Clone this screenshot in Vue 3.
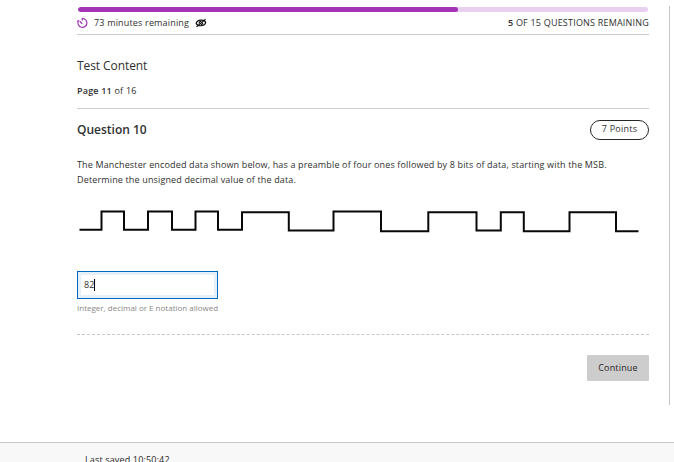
<script setup>
import { ref } from 'vue'

const answered = 379.5
const total = 570
const answer = ref('82')
</script>

<template>
  <div class="page">
    <main class="panel">
      <div class="progress">
        <div class="bar" :style="{ width: (answered / total) * 100 + '%' }"></div>
      </div>
      <header class="status">
        <svg class="timer" viewBox="0 0 12 12">
          <path d="M6.3 3.4V1.4A4.5 4.5 0 1 1 2.2 4.3M3.6 4.2 6.3 6.8M1.2 4.6 3 3.3" />
        </svg>
        <span class="time">73 minutes remaining</span>
        <svg class="eye" viewBox="0 0 12 10">
          <path d="M1.2 5.2C2.3 1.6 9.5 1 10.7 4.5 9.6 8.5 2.4 8.9 1.2 5.2ZM1.5 8.9 10.5 1.2" />
          <path d="M4.3 5.7C4 3.8 5.2 3.2 6.4 3.4M7.6 4.6C7.8 6 6.8 6.7 5.8 6.6" />
        </svg>
        <span class="count"><b>5</b> OF 15 QUESTIONS REMAINING</span>
      </header>

      <section class="intro">
        <h1>Test Content</h1>
        <p><b>Page 11</b> of 16</p>
      </section>

      <div class="heading">
        <h2>Question 10</h2>
        <span class="points">7 Points</span>
      </div>

      <p class="prompt">
        <span class="line">The Manchester encoded data shown below, has a preamble of four ones followed by 8 bits of data, starting with the MSB.</span>
        <span class="line">Determine the unsigned decimal value of the data.</span>
      </p>

      <svg class="wave" viewBox="77 203 572 36">
        <path d="M79.5 229.8H101.5V211.6H124V229.8H148V211.6H172V229.8H195.5V211.6H218V229.8H242V212.2H288.8V230.4H333.5V211.6H381V231.2H428.3V212.2H476.5V230.4H500.8V212.2H523.8V231.2H569.5V212.2H616V231.2H638.5" />
      </svg>

      <div class="field"><span>{{ answer }}</span><i></i></div>
      <p class="hint">Integer, decimal or E notation allowed</p>

      <div class="actions">
        <button type="button">Continue</button>
      </div>
    </main>
    <footer>Last saved 10:50:42</footer>
  </div>
</template>

<style>
body { margin: 0; background: #fff; overflow: hidden; }
</style>

<style scoped>
* { box-sizing: border-box; }
.page { width: 674px; height: 462px; padding-top: 6px; overflow: hidden; display: flex; flex-direction: column; font-family: "Open Sans", sans-serif; font-size: 9px; color: #303030; }
.panel { width: 670px; height: 399px; flex: none; padding: 1px 20px 0 77px; border-right: 1px solid #c7c7c7; }
h1, h2, p { margin: 0; white-space: nowrap; }
.progress { width: 570px; height: 5px; margin-left: 1px; border-radius: 3px; background: #ead0f0; overflow: hidden; }
.bar { height: 100%; border-radius: 3px; background: #a234b5; }
.status { height: 23px; display: flex; align-items: center; border-bottom: 1px solid #cdcdcd; white-space: nowrap; }
.timer { width: 12px; height: 12px; margin-left: -1px; fill: none; stroke: #a234b5; stroke-width: 1.2; }
.time { margin-left: 6px; padding-bottom: 2px; letter-spacing: .17px; }
.eye { width: 12px; height: 10px; margin-left: 6px; fill: none; stroke: #111; stroke-width: 1.2; }
.count { margin-left: auto; padding-bottom: 2px; letter-spacing: .2px; }
.intro { height: 74px; border-bottom: 1px solid #cdcdcd; padding-top: 21px; }
h1 { font-size: 12px; font-weight: 400; line-height: 20px; letter-spacing: -.08px; }
.intro p { margin-top: 7px; line-height: 16px; letter-spacing: .2px; }
b { font-weight: 600; }
.heading { height: 48px; padding-top: 11px; display: flex; justify-content: space-between; align-items: flex-start; }
h2 { font-size: 12px; line-height: 19px; font-weight: 600; }
.points { width: 59px; height: 20px; border: 1px solid #262626; border-radius: 10px; text-align: center; line-height: 15px; font-weight: 500; letter-spacing: .25px; }
.prompt { height: 46px; letter-spacing: .147px; }
.line { display: block; line-height: 15px; width: max-content; }
.wave { display: block; width: 572px; height: 36px; fill: none; stroke: #080808; stroke-width: 2; }
.field { width: 141px; height: 28px; margin-top: 32px; padding-left: 6px; border: 1px solid #006ac3; box-shadow: inset 0 0 0 3px #e5f0f9; display: flex; align-items: center; }
.field span { padding-bottom: 2px; }
.field i { width: 1px; height: 12px; background: #000; }
.hint { height: 36px; line-height: 17px; font-size: 8px; color: #888; border-bottom: 1px dashed #c7c7c7; }
.actions { display: flex; justify-content: flex-end; padding-top: 20px; }
button { width: 62px; height: 26px; padding: 0; border: 0; border-radius: 1px; background: #cdcdcd; color: #262626; font: 400 9px/26px "Open Sans", sans-serif; letter-spacing: .15px; }
footer { height: 57px; flex: none; margin-top: 37px; padding: 10px 0 0 85px; border-top: 1px solid #c7c7c7; background: #f8f8f8; line-height: 14px; color: #262626; letter-spacing: .15px; }
</style>
